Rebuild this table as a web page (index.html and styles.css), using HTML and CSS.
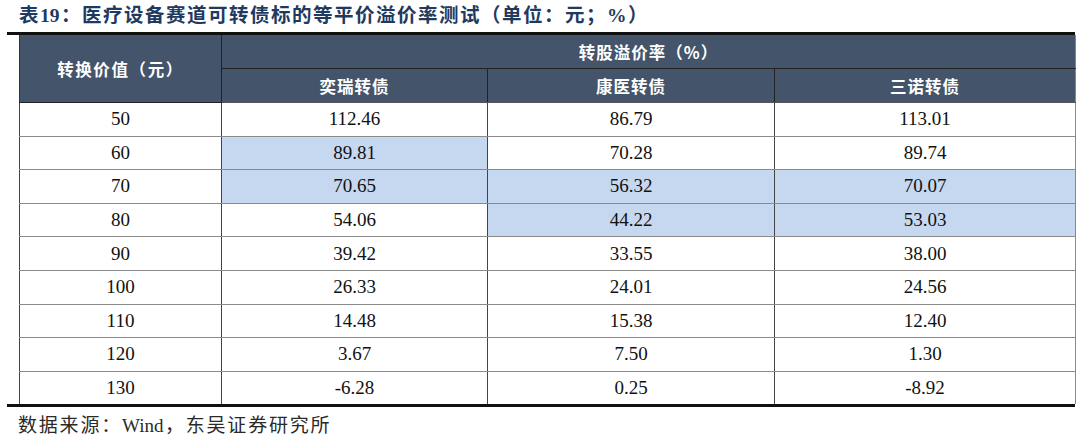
FILE: index.html
```html
<!DOCTYPE html>
<html lang="zh-CN">
<head>
<meta charset="utf-8">
<link rel="stylesheet" href="styles.css">
</head>
<body>
<div class="page">
  <div class="title">表<span class="latin">19</span>：医疗设备赛道可转债标的等平价溢价率测试（单位：元；%）</div>
  <div class="rule"></div>
  <table class="grid">
    <colgroup>
      <col class="c1"><col class="c2"><col class="c3"><col class="c4">
    </colgroup>
    <thead>
      <tr class="h1">
        <th rowspan="2" class="first">转换价值（元）</th>
        <th colspan="3">转股溢价率（%）</th>
      </tr>
      <tr class="h2">
        <th>奕瑞转债</th>
        <th>康医转债</th>
        <th>三诺转债</th>
      </tr>
    </thead>
    <tbody>
      <tr><td>50</td><td>112.46</td><td>86.79</td><td>113.01</td></tr>
      <tr><td>60</td><td class="hl">89.81</td><td>70.28</td><td>89.74</td></tr>
      <tr><td>70</td><td class="hl">70.65</td><td class="hl">56.32</td><td class="hl">70.07</td></tr>
      <tr><td>80</td><td>54.06</td><td class="hl">44.22</td><td class="hl">53.03</td></tr>
      <tr><td>90</td><td>39.42</td><td>33.55</td><td>38.00</td></tr>
      <tr><td>100</td><td>26.33</td><td>24.01</td><td>24.56</td></tr>
      <tr><td>110</td><td>14.48</td><td>15.38</td><td>12.40</td></tr>
      <tr><td>120</td><td>3.67</td><td>7.50</td><td>1.30</td></tr>
      <tr><td>130</td><td>-6.28</td><td>0.25</td><td>-8.92</td></tr>
    </tbody>
  </table>
  <div class="rule bottom"></div>
  <div class="source">数据来源：<span class="latin">Wind</span>，东吴证券研究所</div>
</div>
</body>
</html>
```
FILE: styles.css
```css
html, body {
  margin: 0;
  padding: 0;
  background: #ffffff;
}
.page {
  width: 1080px;
  height: 438px;
  overflow: hidden;
  font-family: "Liberation Serif", "Noto Sans CJK SC", serif;
}
.latin {
  letter-spacing: 0;
  margin-right: 1.5px;
}
.title {
  height: 32px;
  line-height: 31px;
  padding-left: 19px;
  font-size: 19.5px;
  letter-spacing: 1.5px;
  font-weight: bold;
  color: #1f3a60;
  white-space: nowrap;
}
.rule {
  margin-left: 7px;
  width: 1068px;
  height: 3px;
  background: #111111;
}
.rule.bottom {
  height: 3px;
}
.grid {
  margin-left: 19px;
  width: 1056px;
  border-collapse: collapse;
  table-layout: fixed;
}
.c1 { width: 202px; }
.c2 { width: 266px; }
.c3 { width: 287px; }
.c4 { width: 301px; }
.grid th {
  background: #44546a;
  color: #ffffff;
  font-family: "Noto Sans CJK SC", sans-serif;
  font-weight: bold;
  font-size: 16.5px;
  letter-spacing: 1px;
  text-align: center;
  padding: 0;
  border: 1px solid #222222;
  border-top: none;
}
.grid th.first {
  border-left: 1px solid #333333;
  letter-spacing: 1.6px;
}
.grid .h1 th {
  height: 33px;
}
.grid .h2 th {
  height: 33px;
  border-bottom: 1px solid #555555;
}
.grid .h2 th:last-child,
.grid .h1 th:last-child {
  border-right: 1px solid #888888;
}
.grid td {
  height: 32.6px;
  padding: 0;
  text-align: center;
  font-size: 19px;
  color: #111111;
  border-left: 1px solid #444444;
  border-right: 1px solid #444444;
  border-top: 1px solid #8a8a8a;
  border-bottom: 1px solid #8a8a8a;
}
.grid td:last-child {
  border-right: 1px solid #888888;
}
.grid tbody tr:last-child td {
  border-bottom: none;
}
.grid td.hl {
  background: #c6d8ef;
}
.source {
  padding-left: 18px;
  margin-top: 5px;
  font-size: 19px;
  letter-spacing: 1.8px;
  line-height: 28px;
  color: #2a2a2a;
  white-space: nowrap;
}
```
